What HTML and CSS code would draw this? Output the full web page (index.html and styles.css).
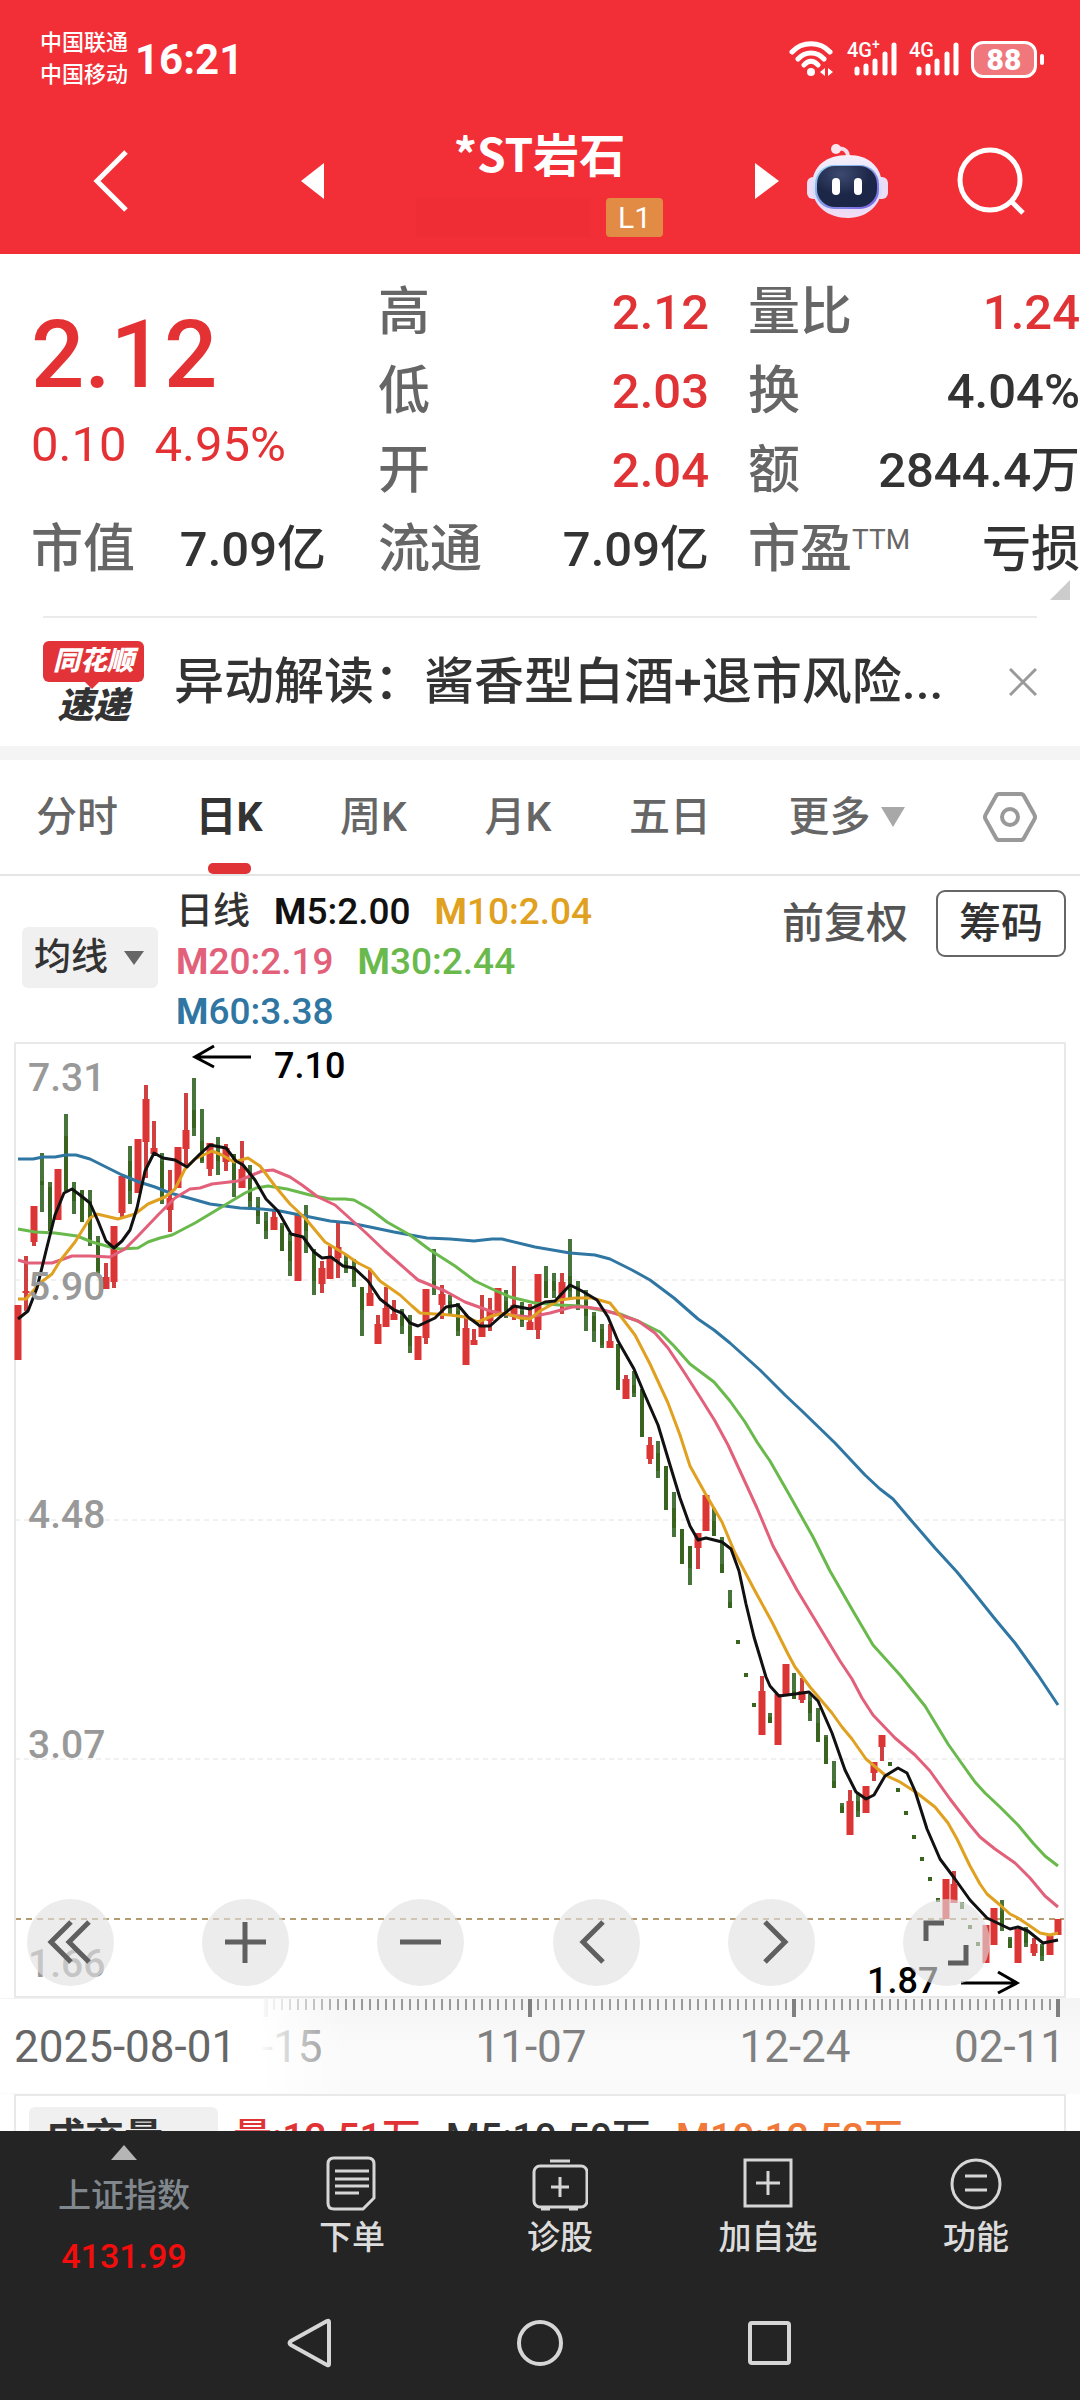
FILE: index.html
```html
<!DOCTYPE html>
<html lang="zh-CN">
<head>
    <meta charset="UTF-8">
    <meta name="viewport" content="width=device-width, initial-scale=1.0">
    <title>*ST岩石</title>
    <link rel="stylesheet" href="styles.css">
</head>
<body>
    <header class="header">
        <div class="status">
            <div class="carriers">
                <span>中国联通</span>
                <span>中国移动</span>
            </div>
            <span class="clock">16:21</span>
            <div class="signals">
                <svg width="46" height="36" viewBox="0 0 46 36" fill="none" stroke="#fff" stroke-width="5" stroke-linecap="round">
                    <path d="M3 11C13 0 31 0 41 11M9 18C16 10 28 10 35 18M15 24C19 19 25 19 29 24"/>
                    <circle cx="22" cy="31" r="4" fill="#fff" stroke="none"/>
                    <path d="M36 27v8l-5-4zM39 27v8l5-4z" fill="#fff" stroke="none"/>
                </svg>
                <div class="signal">
                    <span>4G<sup>+</sup></span>
                    <svg width="50" height="36" viewBox="0 0 50 36" stroke="#fff" stroke-width="5" stroke-linecap="round">
                        <path d="M10 28v4M19 25v7M28 20v12M38 13v19M47 4v28"/>
                    </svg>
                </div>
                <div class="signal">
                    <span>4G</span>
                    <svg width="50" height="36" viewBox="0 0 50 36" stroke="#fff" stroke-width="5" stroke-linecap="round">
                        <path d="M10 28v4M19 25v7M28 20v12M38 13v19M47 4v28"/>
                    </svg>
                </div>
                <span class="battery">88</span>
            </div>
        </div>
        <div class="titlebar">
            <button class="icon-btn" aria-label="返回">
                <svg width="36" height="62" viewBox="0 0 36 62" fill="none" stroke="#fff" stroke-width="5"><path d="M33 2L4 31l29 29"/></svg>
            </button>
            <button class="icon-btn prev" aria-label="上一只">
                <svg width="23" height="36" viewBox="0 0 23 36" fill="#fff"><path d="M23 0v36L0 18z"/></svg>
            </button>
            <div class="title">
                <h1>*ST岩石</h1>
                <div class="title-sub"><span class="code"></span><span class="level">L1</span></div>
            </div>
            <button class="icon-btn" aria-label="下一只">
                <svg width="24" height="36" viewBox="0 0 24 36" fill="#fff"><path d="M0 0v36l24-18z"/></svg>
            </button>
            <button class="icon-btn robot" aria-label="智能助手">
                <svg width="82" height="76" viewBox="0 0 82 76">
                    <defs>
                        <linearGradient id="shell" x1="0" y1="0" x2="0" y2="1"><stop offset="0" stop-color="#f7effa"/><stop offset=".6" stop-color="#d3dcfb"/><stop offset="1" stop-color="#f6dcf4"/></linearGradient>
                        <linearGradient id="rim" x1="0" y1="0" x2="1" y2="1"><stop offset="0" stop-color="#8ed4f2"/><stop offset="1" stop-color="#7a5be0"/></linearGradient>
                        <radialGradient id="visor" cx=".4" cy=".2"><stop offset="0" stop-color="#3d4a70"/><stop offset="1" stop-color="#1c2647"/></radialGradient>
                    </defs>
                    <path d="M30 6c8-2 12 2 12 8" fill="none" stroke="#f5dcec" stroke-width="4"/>
                    <circle cx="30" cy="6" r="5" fill="#fbe6f0"/>
                    <rect x="1" y="34" width="14" height="22" rx="6" fill="#ecdcf6"/>
                    <rect x="68" y="34" width="14" height="22" rx="6" fill="#ecdcf6"/>
                    <path d="M42 12C64 12 76 25 76 43S62 75 42 75 6 63 6 43 20 12 42 12z" fill="url(#shell)"/>
                    <rect x="9" y="22" width="64" height="44" rx="19" fill="url(#rim)"/>
                    <rect x="11" y="23" width="60" height="41" rx="18" fill="url(#visor)"/>
                    <rect x="26" y="35" width="8" height="17" rx="4" fill="#fff"/>
                    <rect x="48" y="35" width="8" height="17" rx="4" fill="#fff"/>
                </svg>
            </button>
            <button class="icon-btn search" aria-label="搜索">
                <svg width="68" height="68" viewBox="0 0 68 68" fill="none" stroke="#fff" stroke-width="5"><circle cx="33" cy="33" r="30"/><path d="M54 54l12 12"/></svg>
            </button>
        </div>
    </header>

    <main>
        <section class="quote">
            <div class="price">
                <strong>2.12</strong>
                <span>0.10</span><span>4.95%</span>
            </div>
            <div class="cell"><span>高</span><b class="up">2.12</b></div>
            <div class="cell"><span>量比</span><b class="up">1.24</b></div>
            <div class="cell"><span>低</span><b class="up">2.03</b></div>
            <div class="cell"><span>换</span><b>4.04%</b></div>
            <div class="cell"><span>开</span><b class="up">2.04</b></div>
            <div class="cell"><span>额</span><b>2844.4万</b></div>
            <div class="cell first"><span>市值</span><b>7.09亿</b></div>
            <div class="cell"><span>流通</span><b>7.09亿</b></div>
            <div class="cell"><span>市盈<sup>TTM</sup></span><b>亏损</b></div>
        </section>

        <section class="news">
            <div class="news-logo">
                <span class="news-brand">同花顺</span>
                <span class="news-kind">速递</span>
            </div>
            <a class="news-text" href="#">异动解读：酱香型白酒+退市风险...</a>
            <button class="icon-btn" aria-label="关闭">
                <svg width="28" height="28" viewBox="0 0 28 28" stroke="#999" stroke-width="3"><path d="M1 1l26 26M27 1L1 27"/></svg>
            </button>
        </section>

        <nav class="tabs">
            <button>分时</button>
            <button class="active">日K</button>
            <button>周K</button>
            <button>月K</button>
            <button>五日</button>
            <button class="more">更多<svg width="24" height="20" viewBox="0 0 24 20" fill="#a8a8a8"><path d="M0 0h24L12 20z"/></svg></button>
            <button aria-label="设置">
                <svg width="54" height="52" viewBox="0 0 54 52" fill="none" stroke="#999" stroke-width="4"><path d="M16 3h22q2 0 3 2l10 18q2 3 0 6L41 47q-1 2-3 2H16q-2 0-3-2L3 29q-2-3 0-6L13 5q1-2 3-2z"/><circle cx="27" cy="26" r="8"/></svg>
            </button>
        </nav>

        <section class="averages">
            <div class="picker">
                <select aria-label="主图指标"><option>均线</option></select>
                <svg width="20" height="14" viewBox="0 0 20 14" fill="#666"><path d="M0 0h20L10 14z"/></svg>
            </div>
            <div class="legend">
                <span class="period">日线</span>
                <span class="m5"><b>M</b>5:2.00</span>
                <span class="m10"><b>M</b>10:2.04</span>
                <span class="m20"><b>M</b>20:2.19</span>
                <span class="m30"><b>M</b>30:2.44</span>
                <span class="m60"><b>M</b>60:3.38</span>
            </div>
            <div class="adjust">
                <button class="plain">前复权</button>
                <button class="chip">筹码</button>
            </div>
        </section>

        <section class="chart">
            <svg id="kline" class="kline" viewBox="0 1036 1080 1057">
                <defs>
                    <linearGradient id="axis-bg" x1="0" y1="0" x2="0" y2="1"><stop offset="0" stop-color="#f4f4f4"/><stop offset=".5" stop-color="#fafafa"/><stop offset="1" stop-color="#fafafa"/></linearGradient>
                    <linearGradient id="axis-fade"><stop offset="0" stop-color="#fff"/><stop offset=".74" stop-color="#fff"/><stop offset="1" stop-color="#fff" stop-opacity="0"/></linearGradient>
                </defs>
                <rect x="0" y="1997" width="1080" height="96" fill="url(#axis-bg)"/>
                <path class="grid" d="M15 1279H1065M15 1519H1065M15 1758H1065"/>
                <path class="last-price" d="M15 1918H1065"/>
                <rect class="frame" x="15" y="1042" width="1050" height="954"/>
                <g id="candles"></g>
                <g id="lines"></g>
                <g id="ticks"></g>
                <g class="scale">
                    <text x="28" y="1090">7.31</text>
                    <text x="28" y="1299">5.90</text>
                    <text x="28" y="1527">4.48</text>
                    <text x="28" y="1757">3.07</text>
                    <text x="28" y="1976">1.66</text>
                </g>
                <g class="extreme">
                    <path d="M251 1056H195M214 1045l-19 11 19 10"/>
                    <text x="274" y="1077">7.10</text>
                    <path d="M961 1982h56M998 1971l19 11-19 10"/>
                    <text x="867" y="1992">1.87</text>
                </g>
                <g class="dates">
                    <text x="267" y="2061" text-anchor="middle">09-15</text>
                    <text x="531" y="2061" text-anchor="middle">11-07</text>
                    <text x="795" y="2061" text-anchor="middle">12-24</text>
                    <text x="1065" y="2061" text-anchor="end">02-11</text>
                    <rect x="0" y="1998" width="350" height="94" fill="url(#axis-fade)"/>
                    <text class="start" x="14" y="2061">2025-08-01</text>
                </g>
            </svg>
            <div class="chart-tools">
                <button aria-label="快退"><svg viewBox="0 0 87 87"><path d="M44 23L24 43l20 20M62 23L42 43l20 20"/></svg></button>
                <button aria-label="放大"><svg viewBox="0 0 87 87"><path d="M43 23v41M23 43h41"/></svg></button>
                <button aria-label="缩小"><svg viewBox="0 0 87 87"><path d="M23 43h41"/></svg></button>
                <button aria-label="左移"><svg viewBox="0 0 87 87"><path d="M50 23L30 43l20 20"/></svg></button>
                <button aria-label="右移"><svg viewBox="0 0 87 87"><path d="M37 23l20 20-20 20"/></svg></button>
                <button aria-label="全屏"><svg viewBox="0 0 87 87"><path d="M23 42V24h18M63 46v18H45"/></svg></button>
            </div>
        </section>

        <section class="volume">
            <div class="picker">
                <select aria-label="副图指标"><option>成交量</option></select>
                <svg width="20" height="14" viewBox="0 0 20 14" fill="#666"><path d="M0 0h20L10 14z"/></svg>
            </div>
            <span class="up">量:12.51万</span>
            <span>M5:10.50万</span>
            <span class="vol10">M10:12.52万</span>
        </section>
    </main>

    <footer class="footer">
        <nav class="actions">
            <button class="index">
                <svg width="26" height="15" viewBox="0 0 26 15" fill="#b5b5b5"><path d="M13 0l13 15H0z"/></svg>
                <span class="index-name">上证指数</span>
                <span class="index-value">4131.99</span>
            </button>
            <button>
                <svg width="56" height="56" viewBox="0 0 56 56"><path d="M10 2h34q6 0 6 6v34L39 53H10q-6 0-6-6V8q0-6 6-6zM11 15h34M11 23h34M11 30h34M11 37h24"/></svg>
                <span>下单</span>
            </button>
            <button>
                <svg width="56" height="56" viewBox="0 0 56 56"><rect x="2" y="10" width="53" height="41" rx="6"/><path d="M18 5h20M28 21v20M19 31h18M9 53h9M37 53h9"/></svg>
                <span>诊股</span>
            </button>
            <button>
                <svg width="56" height="56" viewBox="0 0 56 56"><rect x="5" y="4" width="46" height="46"/><path d="M28 15v24M16 27h24"/></svg>
                <span>加自选</span>
            </button>
            <button>
                <svg width="56" height="56" viewBox="0 0 56 56"><circle cx="28" cy="28" r="24"/><path d="M17 20h22M17 34h22"/></svg>
                <span>功能</span>
            </button>
        </nav>
        <nav class="system">
            <button aria-label="返回"><svg width="46" height="50" viewBox="0 0 46 50"><path d="M42 4v42q0 2-2 1L4 27q-3-2 0-4L40 3q2-1 2 1z"/></svg></button>
            <button aria-label="主页"><svg width="46" height="50" viewBox="0 0 46 50"><circle cx="23" cy="25" r="21"/></svg></button>
            <button aria-label="最近任务"><svg width="46" height="50" viewBox="0 0 46 50"><rect x="3" y="5" width="39" height="40" rx="2"/></svg></button>
        </nav>
    </footer>

    <script src="script.js"></script>
</body>
</html>
```
FILE: styles.css
```css
* {
    box-sizing: border-box;
}
body {
    display: flex;
    flex-direction: column;
    height: 100vh;
    margin: 0;
    background: #fff;
    color: #333;
    font-family: Roboto, "Noto Sans CJK SC", sans-serif;
}
button {
    margin: 0;
    padding: 0;
    border: 0;
    background: none;
    color: inherit;
    font: inherit;
}
svg {
    display: block;
    flex: none;
}
.up {
    color: #e03336;
}

/* header */
.header {
    flex: none;
    background: #f22f37;
    color: #fff;
}
.status {
    display: flex;
    align-items: center;
    height: 118px;
    padding: 0 36px 0 40px;
}
.carriers {
    display: flex;
    flex-direction: column;
    font-size: 22px;
    font-weight: 500;
    line-height: 32px;
}
.clock {
    margin-left: 7px;
    font-size: 42px;
    font-weight: 700;
}
.signals {
    display: flex;
    align-items: center;
    gap: 12px;
    margin-left: auto;
}
.signal {
    position: relative;
}
.signal span {
    position: absolute;
    left: 0;
    top: 0;
    font-size: 20px;
    font-weight: 500;
    line-height: 18px;
}
.signal sup {
    font-size: 14px;
    line-height: 1px;
}
.battery {
    position: relative;
    width: 66px;
    margin-right: 7px;
    border: 3px solid #fff;
    border-radius: 12px;
    background: #f0787d;
    font-size: 30px;
    font-weight: 900;
    line-height: 31px;
    text-align: center;
}
.battery::after {
    content: "";
    position: absolute;
    right: -10px;
    top: 10px;
    width: 4px;
    height: 11px;
    border-radius: 2px;
    background: #fff;
}
.titlebar {
    display: flex;
    align-items: center;
    height: 136px;
    padding: 0 55px 10px 93px;
}
.prev {
    margin-left: 172px;
}
.title {
    flex: 1;
    text-align: center;
}
.title h1 {
    margin: 0;
    font-family: "Noto Sans CJK SC", sans-serif;
    font-size: 46px;
    font-weight: 700;
    line-height: 52px;
}
.title-sub {
    display: flex;
    justify-content: center;
    gap: 16px;
    margin-top: 20px;
}
.code {
    width: 174px;
    background: #ee2e34;
}
.level {
    padding: 0 12px;
    border-radius: 4px;
    background: #e28b45;
    font-size: 30px;
    line-height: 39px;
}
.robot {
    margin-left: 27px;
}
.search {
    margin-left: 69px;
}

main {
    flex: 1;
    min-height: 0;
    overflow: hidden;
}

/* quote */
.quote {
    position: relative;
    display: grid;
    grid-template-columns: 308fr 331fr 332fr;
    grid-auto-rows: 79px;
    column-gap: 39px;
    padding: 19px 0 27px 31px;
}
.quote::after {
    content: "";
    position: absolute;
    right: 10px;
    bottom: 16px;
    border: 10px solid;
    border-color: transparent #ccc #ccc transparent;
}
.price {
    grid-row: span 3;
    color: #e43234;
    font-size: 49px;
}
.price strong {
    display: block;
    margin-top: 26px;
    font-size: 94px;
    font-weight: 500;
    line-height: 112px;
}
.price span {
    margin-right: 28px;
    line-height: 68px;
}
.cell {
    display: flex;
    justify-content: space-between;
    font-size: 52px;
    font-weight: 500;
    line-height: 79px;
    white-space: nowrap;
}
.cell span {
    color: #666;
}
.cell b {
    font-size: 49px;
    font-weight: 500;
}
.cell sup {
    font-size: 28px;
    font-weight: 400;
    line-height: 1px;
}
.first {
    padding-right: 13px;
}

/* news */
.news {
    display: flex;
    align-items: center;
    height: 130px;
    margin: 0 43px;
    border-top: 2px solid #ebebeb;
}
.news-logo {
    width: 101px;
    margin-right: 30px;
    font-style: italic;
    font-weight: 900;
    text-align: center;
}
.news-logo span {
    display: block;
}
.news-brand {
    position: relative;
    border-radius: 6px;
    background: #e23338;
    color: #fff;
    font-size: 27px;
    line-height: 41px;
}
.news-brand::after {
    content: "";
    position: absolute;
    left: 42px;
    top: 41px;
    border: 7px solid transparent;
    border-top-color: #e23338;
}
.news-kind {
    margin-top: 6px;
    font-size: 36px;
    line-height: 36px;
}
.news-text {
    flex: 1;
    color: #333;
    font-size: 50px;
    font-weight: 500;
    line-height: 64px;
    text-decoration: none;
    white-space: nowrap;
}

/* period tabs */
.tabs {
    display: flex;
    justify-content: space-between;
    align-items: center;
    height: 130px;
    padding: 0 43px 0 36px;
    border-top: 14px solid #f4f4f4;
    border-bottom: 2px solid #e5e5e5;
    color: #666;
    font-size: 41px;
    font-weight: 500;
    line-height: 48px;
}
.tabs button {
    position: relative;
}
.tabs .active {
    color: #333;
    font-weight: 700;
}
.active::after {
    content: "";
    position: absolute;
    left: 12px;
    bottom: -33px;
    width: 43px;
    height: 11px;
    border-radius: 5px;
    background: #e03336;
}
.more {
    display: flex;
    align-items: center;
    gap: 11px;
}

/* indicator pickers */
.picker {
    position: relative;
}
.picker select {
    appearance: none;
    height: 61px;
    padding: 0 50px 0 12px;
    border: 0;
    border-radius: 6px;
    background: #f0f0f0;
    color: #333;
    font: inherit;
    font-weight: 500;
}
.picker svg {
    position: absolute;
    right: 14px;
    top: 24px;
}
.averages {
    display: flex;
    align-items: flex-start;
    padding: 11px 14px 0 22px;
    font-size: 37px;
}
.averages .picker {
    margin-top: 40px;
}
.legend {
    display: flex;
    flex-wrap: wrap;
    column-gap: 24px;
    max-width: 480px;
    margin-left: 18px;
    font-weight: 500;
    line-height: 50px;
}
.m5 {
    color: #111;
}
.m10 {
    color: #e0a020;
}
.m20 {
    color: #e2607a;
}
.m30 {
    color: #69b94c;
}
.m60 {
    color: #2f76a3;
}
.adjust {
    display: flex;
    align-items: center;
    gap: 28px;
    margin: 3px 0 0 auto;
    font-size: 42px;
    font-weight: 500;
    line-height: 50px;
}
.plain {
    color: #555;
}
.chip {
    height: 67px;
    padding: 0 21px;
    border: 2px solid #666;
    border-radius: 9px;
}

/* chart */
.chart {
    position: relative;
}
.kline {
    width: 100%;
}
.frame {
    fill: none;
    stroke: #e9e9e9;
    stroke-width: 2;
}
.grid {
    stroke: #e2e2e2;
    stroke-width: 1;
    stroke-dasharray: 5 4;
}
.last-price {
    stroke: #b39b72;
    stroke-width: 2;
    stroke-dasharray: 6 5;
}
.line {
    fill: none;
    stroke-width: 3;
    stroke-linejoin: round;
}
.scale {
    fill: #999;
    font-size: 39px;
    font-weight: 500;
}
.extreme {
    fill: #000;
    font-size: 36px;
    font-weight: 500;
}
.extreme path {
    fill: none;
    stroke: #000;
    stroke-width: 3;
}
.dates {
    fill: #808080;
    font-size: 44px;
}
.dates .start {
    fill: #666;
}
.chart-tools {
    position: absolute;
    left: 27px;
    right: 90px;
    bottom: 108px;
    display: flex;
    justify-content: space-between;
}
.chart-tools button {
    width: 87px;
    height: 87px;
    border-radius: 50%;
    background: rgba(224, 224, 224, .62);
}
.chart-tools svg {
    fill: none;
    stroke: #5f5f5f;
    stroke-width: 5;
}

/* volume */
.volume {
    display: flex;
    align-items: center;
    gap: 25px;
    margin: 0 14px;
    padding: 11px 13px;
    border: 2px solid #e9e9e9;
    font-size: 39px;
    font-weight: 500;
    line-height: 56px;
    white-space: nowrap;
}
.volume .picker {
    margin-right: -10px;
}
.volume select {
    padding: 0 54px 0 17px;
    font-weight: 700;
}
.vol10 {
    color: #f07838;
}

/* footer */
.footer {
    flex: none;
    background: #242424;
    color: #dcdcdc;
}
.actions {
    display: grid;
    grid-template-columns: 248fr 208fr 208fr 208fr 208fr;
    height: 154px;
    font-size: 33px;
    font-weight: 500;
}
.actions button {
    display: flex;
    flex-direction: column;
    align-items: center;
    padding-top: 25px;
    line-height: 52px;
}
.actions svg,
.system svg {
    fill: none;
    stroke: #d6d6d6;
    stroke-width: 3;
}
.actions .index {
    gap: 12px;
    padding-top: 14px;
    line-height: 48px;
}
.actions .index svg {
    fill: #b5b5b5;
    stroke: none;
}
.index-name {
    color: #80878d;
}
.index-value {
    color: #f30d0d;
    font-size: 34px;
}
.system {
    display: flex;
    align-items: center;
    justify-content: center;
    gap: 184px;
    height: 115px;
}
.system svg {
    stroke-width: 4;
}
```
FILE: script.js
```js
const SVG = 'http://www.w3.org/2000/svg';

// [direction, high, body top, body bottom, low], one candle every 8 units from x = 18
const candles = [
    ['r', 1304, 1304, 1359, 1359], ['r', 1255, 1290, 1292, 1310], ['r', 1205, 1205, 1241, 1245], ['g', 1152, 1180, 1184, 1211],
    ['g', 1181, 1186, 1230, 1230], ['r', 1168, 1168, 1219, 1219], ['g', 1113, 1135, 1190, 1190], ['g', 1181, 1190, 1200, 1213],
    ['g', 1189, 1189, 1221, 1221], ['g', 1189, 1200, 1240, 1245], ['g', 1235, 1240, 1270, 1273], ['r', 1262, 1276, 1288, 1288],
    ['r', 1225, 1225, 1281, 1287], ['r', 1175, 1175, 1212, 1217], ['g', 1145, 1160, 1190, 1203], ['r', 1138, 1138, 1192, 1192],
    ['r', 1084, 1098, 1141, 1177], ['r', 1120, 1147, 1153, 1153], ['g', 1152, 1160, 1195, 1203], ['r', 1169, 1197, 1209, 1231],
    ['r', 1146, 1146, 1187, 1187], ['r', 1092, 1129, 1148, 1165], ['g', 1077, 1109, 1127, 1135], ['g', 1108, 1140, 1160, 1162],
    ['r', 1142, 1142, 1168, 1175], ['g', 1136, 1150, 1160, 1174], ['r', 1143, 1147, 1161, 1170], ['g', 1153, 1153, 1180, 1196],
    ['r', 1140, 1168, 1187, 1187], ['g', 1164, 1175, 1200, 1207], ['g', 1196, 1205, 1215, 1223], ['g', 1211, 1220, 1230, 1238],
    ['r', 1208, 1216, 1229, 1229], ['g', 1222, 1225, 1250, 1250], ['g', 1232, 1240, 1260, 1275], ['r', 1213, 1213, 1280, 1280],
    ['g', 1204, 1215, 1230, 1252], ['g', 1248, 1250, 1280, 1294], ['r', 1260, 1267, 1283, 1292], ['r', 1245, 1257, 1278, 1278],
    ['r', 1220, 1246, 1257, 1277], ['g', 1253, 1260, 1268, 1272], ['g', 1258, 1265, 1280, 1286], ['g', 1286, 1286, 1309, 1335],
    ['r', 1269, 1292, 1305, 1305], ['r', 1314, 1323, 1343, 1343], ['r', 1286, 1307, 1326, 1326], ['r', 1299, 1313, 1319, 1319],
    ['g', 1308, 1315, 1325, 1333], ['g', 1314, 1325, 1345, 1352], ['r', 1335, 1335, 1359, 1359], ['r', 1288, 1288, 1337, 1343],
    ['g', 1248, 1280, 1287, 1294], ['r', 1284, 1293, 1304, 1318], ['g', 1294, 1300, 1308, 1313], ['g', 1302, 1310, 1330, 1335],
    ['r', 1313, 1327, 1364, 1364], ['r', 1328, 1339, 1344, 1344], ['r', 1294, 1324, 1336, 1336], ['r', 1297, 1309, 1320, 1330],
    ['r', 1287, 1287, 1313, 1313], ['g', 1289, 1300, 1310, 1317], ['r', 1265, 1304, 1313, 1319], ['g', 1301, 1310, 1320, 1326],
    ['r', 1303, 1321, 1329, 1329], ['r', 1273, 1273, 1329, 1338], ['g', 1265, 1280, 1297, 1297], ['g', 1272, 1280, 1290, 1297],
    ['r', 1272, 1281, 1298, 1313], ['g', 1238, 1275, 1290, 1297], ['g', 1280, 1285, 1305, 1309], ['g', 1289, 1300, 1315, 1330],
    ['g', 1311, 1315, 1330, 1341], ['g', 1323, 1328, 1344, 1347], ['r', 1323, 1340, 1347, 1347], ['g', 1343, 1343, 1389, 1389],
    ['r', 1374, 1378, 1398, 1398], ['g', 1370, 1384, 1392, 1396], ['g', 1388, 1388, 1436, 1436], ['r', 1436, 1444, 1458, 1463],
    ['g', 1440, 1452, 1470, 1477], ['g', 1465, 1465, 1509, 1509], ['g', 1491, 1507, 1527, 1536], ['g', 1528, 1528, 1563, 1563],
    ['g', 1545, 1545, 1567, 1584], ['r', 1532, 1532, 1547, 1568], ['r', 1494, 1494, 1530, 1530], ['g', 1507, 1520, 1535, 1535],
    ['g', 1536, 1563, 1572, 1572], ['g', 1589, 1601, 1607, 1607], ['g', 1639, 1639, 1643, 1643], ['g', 1672, 1672, 1676, 1676],
    ['g', 1702, 1702, 1706, 1706], ['r', 1675, 1690, 1734, 1734], ['g', 1712, 1716, 1722, 1722], ['r', 1693, 1693, 1744, 1744],
    ['r', 1663, 1663, 1695, 1695], ['g', 1672, 1690, 1698, 1698], ['r', 1677, 1690, 1699, 1702], ['g', 1693, 1700, 1712, 1720],
    ['g', 1707, 1722, 1741, 1741], ['g', 1734, 1736, 1763, 1763], ['g', 1760, 1780, 1787, 1787], ['g', 1802, 1805, 1812, 1812],
    ['r', 1789, 1800, 1834, 1834], ['g', 1793, 1800, 1810, 1816], ['r', 1785, 1785, 1812, 1812], ['r', 1761, 1761, 1772, 1780],
    ['r', 1734, 1734, 1746, 1760], ['g', 1761, 1761, 1765, 1765], ['g', 1787, 1787, 1791, 1791], ['g', 1810, 1810, 1814, 1814],
    ['g', 1834, 1834, 1838, 1838], ['g', 1856, 1856, 1860, 1860], ['g', 1876, 1876, 1880, 1880], ['g', 1897, 1897, 1901, 1901],
    ['r', 1878, 1878, 1918, 1918], ['r', 1870, 1883, 1902, 1902], ['g', 1901, 1904, 1908, 1908], ['g', 1924, 1924, 1928, 1928],
    ['g', 1941, 1941, 1945, 1945], ['r', 1924, 1924, 1962, 1962], ['r', 1907, 1907, 1944, 1944], ['g', 1899, 1910, 1925, 1930],
    ['g', 1936, 1938, 1947, 1947], ['r', 1928, 1928, 1962, 1962], ['g', 1926, 1930, 1942, 1946], ['r', 1937, 1943, 1952, 1955],
    ['g', 1943, 1945, 1955, 1960], ['r', 1935, 1935, 1954, 1954], ['r', 1918, 1918, 1934, 1934]
];

const averages = [
    ['#2f76a3', '18,1158 33,1158 43,1156 55,1156 66,1154 76,1154 90,1158 108,1167 122,1174 139,1181 155,1186 170,1192 185,1196 210,1203 240,1207 262,1208 280,1210 305,1215 330,1220 350,1222 370,1226 394,1231 427,1237 450,1238 474,1240 492,1238 502,1238 535,1246 570,1252 595,1254 610,1258 632,1269 650,1279 674,1297 698,1318 714,1329 730,1342 760,1369 785,1394 802,1410 835,1442 865,1474 880,1488 893,1498 910,1518 935,1547 957,1571 975,1593 995,1618 1015,1642 1038,1674 1058,1704'],
    ['#69b94c', '18,1228 35,1231 55,1232 77,1235 92,1241 110,1246 120,1248 138,1247 148,1241 160,1237 172,1234 195,1222 220,1207 245,1192 256,1187 268,1185 287,1188 310,1194 330,1198 345,1198 354,1199 370,1208 387,1221 410,1234 430,1249 455,1265 475,1280 492,1288 510,1296 535,1302 560,1304 580,1305 600,1309 620,1313 640,1321 660,1331 674,1345 690,1363 714,1381 730,1400 745,1421 757,1441 770,1460 790,1495 813,1536 830,1570 853,1610 873,1644 900,1674 925,1705 948,1743 960,1760 975,1781 985,1792 1000,1806 1018,1824 1033,1842 1045,1855 1058,1865'],
    ['#e2607a', '18,1259 28,1262 52,1262 72,1255 90,1255 110,1256 125,1248 138,1235 158,1214 175,1197 190,1188 200,1187 212,1183 238,1180 262,1170 273,1169 290,1176 302,1184 318,1196 335,1204 365,1231 385,1250 418,1279 445,1290 465,1301 490,1310 510,1314 530,1316 550,1312 572,1306 585,1306 600,1308 620,1314 638,1320 655,1332 668,1347 684,1371 700,1396 715,1420 728,1444 740,1470 757,1507 773,1545 797,1589 820,1627 840,1660 852,1678 862,1697 873,1714 895,1737 915,1754 930,1770 950,1798 970,1824 980,1836 995,1848 1015,1862 1030,1877 1045,1895 1058,1906'],
    ['#e0a020', '18,1298 26,1298 40,1282 52,1273 60,1260 75,1241 90,1217 97,1213 118,1218 135,1213 148,1203 165,1196 175,1188 185,1168 195,1158 212,1150 222,1154 234,1161 248,1157 260,1165 275,1185 290,1203 305,1217 325,1241 345,1253 358,1262 370,1268 380,1280 400,1294 412,1305 420,1312 435,1313 450,1314 465,1316 478,1321 492,1315 505,1312 520,1317 530,1318 540,1310 560,1299 575,1297 592,1297 610,1302 622,1317 635,1334 650,1363 668,1402 680,1434 690,1465 705,1492 722,1521 735,1552 755,1590 772,1621 788,1653 795,1666 810,1686 832,1712 842,1726 852,1738 866,1758 885,1774 900,1781 917,1792 935,1806 948,1822 957,1838 970,1865 980,1883 987,1893 1000,1904 1010,1913 1018,1917 1030,1925 1040,1932 1050,1934 1058,1932'],
    ['#111', '18,1318 28,1310 37,1287 46,1250 55,1214 64,1192 72,1188 80,1194 90,1202 98,1220 106,1240 114,1247 122,1240 130,1229 137,1207 145,1170 154,1152 163,1157 175,1159 187,1166 200,1153 210,1144 226,1147 236,1160 243,1164 255,1179 266,1198 278,1210 291,1233 303,1236 314,1251 322,1257 331,1256 343,1265 354,1267 368,1280 380,1298 394,1309 402,1312 410,1322 418,1325 435,1317 446,1306 458,1304 468,1316 480,1325 490,1325 500,1316 514,1305 530,1308 545,1301 555,1300 570,1284 582,1290 597,1299 608,1316 618,1340 634,1368 644,1392 658,1424 670,1464 680,1497 690,1525 698,1539 706,1537 722,1541 731,1548 739,1570 746,1603 754,1636 766,1676 770,1685 779,1695 795,1693 809,1691 818,1700 832,1732 845,1769 856,1791 866,1798 874,1794 885,1775 898,1767 907,1772 915,1790 927,1828 940,1858 955,1878 970,1899 987,1917 1010,1928 1018,1926 1028,1930 1043,1942 1058,1939']
];

function add(parent, name, attrs) {
    const el = document.createElementNS(SVG, name);
    for (const key in attrs) el.setAttribute(key, attrs[key]);
    document.getElementById(parent).appendChild(el);
    return el;
}

candles.forEach(([dir, high, top, bottom, low], i) => {
    const x = 18 + i * 8;
    const red = dir === 'r';
    const body = red ? 7 : 4;
    add('candles', 'rect', { x: x - 2, y: high, width: 4, height: low - high, fill: red ? '#cf4040' : '#47743a' });
    add('candles', 'rect', { x: x - body / 2, y: top, width: body, height: bottom - top, fill: red ? '#dc3535' : '#386420' });
});

averages.forEach(([color, points]) => {
    add('lines', 'polyline', { class: 'line', points: points, stroke: color });
});

// time ruler: a long mark every 33 trading days
for (let i = 29; i <= 130; i++) {
    const major = (130 - i) % 33 === 0;
    add('ticks', 'rect', { x: 18 + i * 8 - (major ? 2 : 1), y: 1998, width: major ? 4 : 2, height: major ? 18 : 11, fill: major ? '#808080' : '#999' });
}
```
